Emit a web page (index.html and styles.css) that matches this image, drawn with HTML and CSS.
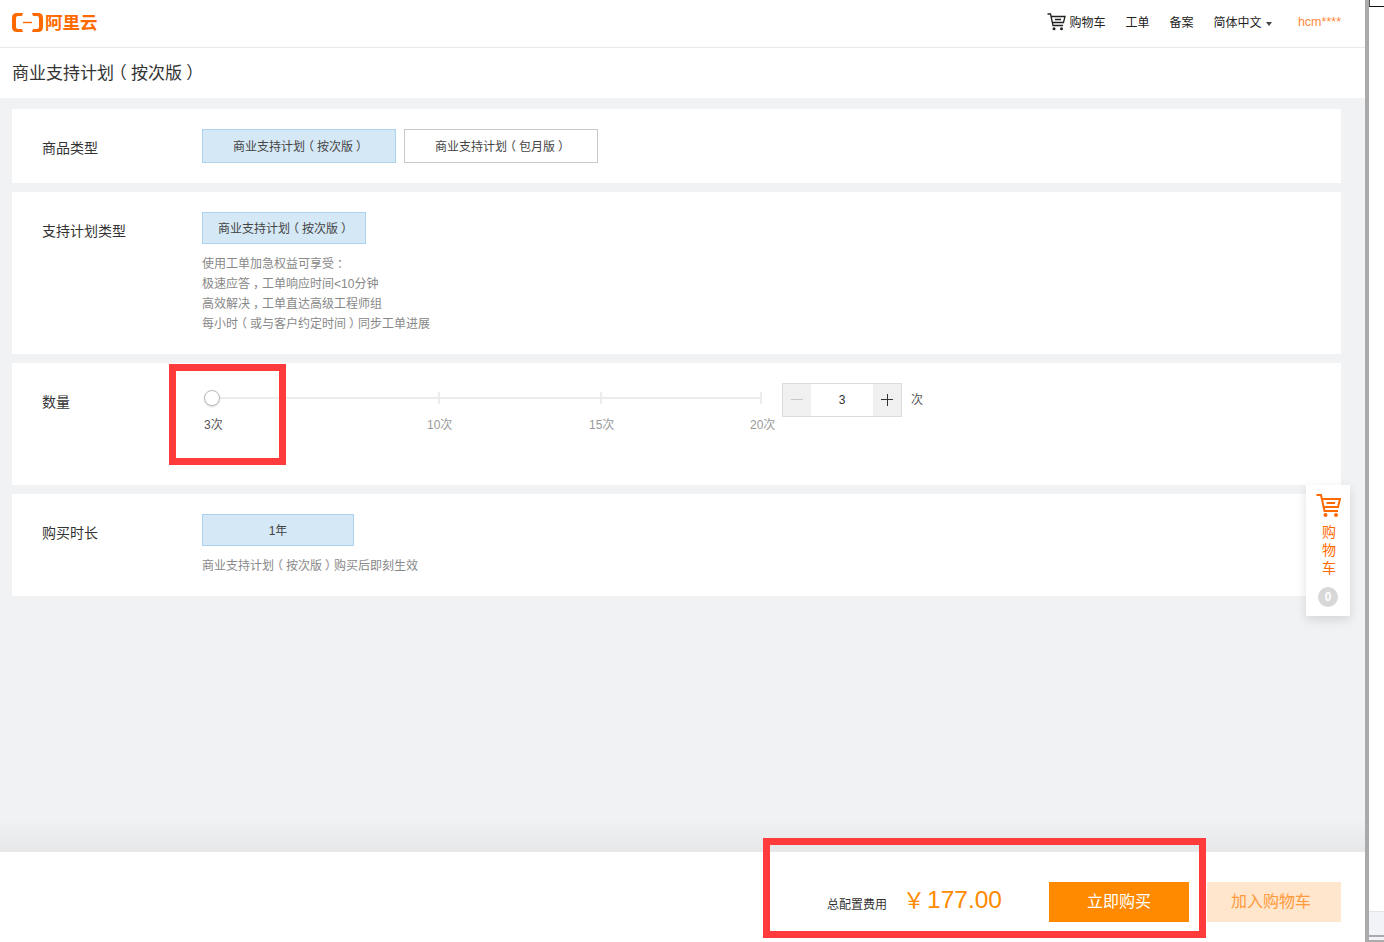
FILE: index.html
```html
<!DOCTYPE html>
<html lang="zh-CN">
	<head>
		<meta charset="utf-8">
		<title>商业支持计划</title>
		<link rel="stylesheet" href="styles.css">
	</head>
	<body>
		<div class="page">
			<div class="topBar">
				<div class="logo">
					<svg width="31" height="19" viewBox="0 0 31 19">
						<path d="M11 0H5Q0 0 0 5V14Q0 19 5 19H11L10 16H6Q4 16 4 14V5Q4 3 6 3H10Z" fill="#ff6a00"/>
						<path d="M20 0H26Q31 0 31 5V14Q31 19 26 19H20L21 16H25Q27 16 27 14V5Q27 3 25 3H21Z" fill="#ff6a00"/>
						<path d="M11 9.5H20" stroke="#ff6a00" stroke-width="1.4"/>
					</svg>
					<span class="logoText">阿里云</span>
				</div>
				<div class="topNav">
					<a class="navCart">
						<svg width="19" height="18" viewBox="0 0 19 18">
							<path d="M0.5 1H3.5L6 12.5H16M4.2 3.5H18L16.5 9.5H5.5M8 6.5H14" fill="none" stroke="#222" stroke-width="1.3"/>
							<circle cx="7" cy="15.8" r="1.5" fill="#222"/>
							<circle cx="14.5" cy="15.8" r="1.5" fill="#222"/>
						</svg>
						购物车
					</a>
					<a class="navItem">工单</a>
					<a class="navItem">备案</a>
					<a class="navItem">简体中文 <span class="caret"></span></a>
					<a class="navUser">hcm****</a>
				</div>
			</div>

			<div class="titleBar">商业支持计划<span class="pn">（</span>按次版<span class="pn">）</span></div>

			<div class="content">
				<div class="card cardType">
					<div class="label">商品类型</div>
					<div class="options">
						<div class="option active wide">商业支持计划<span class="pn">（</span>按次版<span class="pn">）</span></div>
						<div class="option wide">商业支持计划<span class="pn">（</span>包月版<span class="pn">）</span></div>
					</div>
				</div>

				<div class="card cardPlan">
					<div class="label">支持计划类型</div>
					<div class="field">
						<div class="option active plan">商业支持计划<span class="pn">（</span>按次版<span class="pn">）</span></div>
						<div class="desc">
							使用工单加急权益可享受<span class="pn">：</span><br>
							极速应答<span class="pn">，</span>工单响应时间&lt;10分钟<br>
							高效解决<span class="pn">，</span>工单直达高级工程师组<br>
							每小时<span class="pn">（</span>或与客户约定时间<span class="pn">）</span>同步工单进展
						</div>
					</div>
				</div>

				<div class="card cardCount">
					<div class="label">数量</div>
					<div class="sliderRow">
						<div class="slider">
							<div class="rail">
								<span class="tick" style="left: 234px"></span>
								<span class="tick" style="left: 396px"></span>
								<span class="tick" style="left: 556px"></span>
								<span class="handle"></span>
							</div>
							<div class="marks">
								<span class="mark first" style="left: 2px">3次</span>
								<span class="mark" style="left: 225px">10次</span>
								<span class="mark" style="left: 387px">15次</span>
								<span class="mark" style="left: 548px">20次</span>
							</div>
						</div>
						<div class="stepper">
							<span class="stepBtn minus"><i></i></span>
							<span class="stepVal">3</span>
							<span class="stepBtn plus"><i></i><b></b></span>
						</div>
						<span class="unit">次</span>
					</div>
				</div>

				<div class="card cardTime">
					<div class="label">购买时长</div>
					<div class="field">
						<div class="option active year">1年</div>
						<div class="desc">商业支持计划<span class="pn">（</span>按次版<span class="pn">）</span>购买后即刻生效</div>
					</div>
				</div>
			</div>

			<div class="bottomBar">
				<span class="totalLabel">总配置费用</span>
				<span class="price"><span class="yen">￥</span>177.00</span>
				<a class="buyBtn">立即购买</a>
				<a class="addBtn">加入购物车</a>
			</div>

			<div class="sideCart">
				<svg width="25" height="24" viewBox="0 0 25 24">
					<path d="M0.5 1H5L8.5 17H22M6 5H24L22 13H7.5M10.5 9H19" fill="none" stroke="#ff6a00" stroke-width="2"/>
					<circle cx="9.5" cy="21" r="2" fill="#ff6a00"/>
					<circle cx="20" cy="21" r="2" fill="#ff6a00"/>
				</svg>
				<div class="sideText">购<br>物<br>车</div>
				<span class="sideCount">0</span>
			</div>

			<div class="mark1"></div>
			<div class="mark2"></div>
		</div>

		<div class="scrollEdge">
			<div class="edgeTop"></div>
			<div class="edgeBottom"></div>
		</div>
	</body>
</html>
```

FILE: styles.css
```css
html, body { margin: 0; height: 100%; overflow: hidden; }

body
{
	display: flex;
	background-color: white;
	font-family: "Liberation Sans", "Noto Sans CJK SC", sans-serif;
	font-size: 12px;
	color: #333;
	text-spacing-trim: space-all;
}

a { color: inherit; text-decoration: none; }

/* full width punctuation sits centred in its cell */
.pn
{
	margin: 0 0.25em;
	font-feature-settings: "halt";
}

.page
{
	position: relative;
	display: flex;
	flex: none;
	flex-direction: column;
	width: 1365px;
	height: 942px;
	background-color: #f1f2f4;
}

.topBar
{
	display: flex;
	flex: none;
	justify-content: space-between;
	align-items: center;
	box-sizing: border-box;
	height: 48px;
	padding: 0 24px 4px 12px;
	border-bottom: 1px solid #e8e8e8;
	background-color: white;
}

.logo
{
	display: flex;
	align-items: center;
	color: #ff6a00;
}

.logo svg { margin-top: 2px; }

.logoText
{
	margin-left: 2px;
	font-size: 17.5px;
	font-weight: bold;
}

.topNav
{
	display: flex;
	align-items: center;
	color: #222;
}

.navCart
{
	display: flex;
	align-items: center;
	gap: 4px;
	margin-right: 20px;
}

.navItem { margin-right: 20px; }

.caret
{
	display: inline-block;
	margin-left: 1px;
	vertical-align: middle;
	border-top: 4px solid #444;
	border-left: 3.5px solid transparent;
	border-right: 3.5px solid transparent;
}

.navUser
{
	margin-left: 6px;
	color: #ff8a3c;
	font-size: 12.5px;
}

.titleBar
{
	flex: none;
	box-sizing: border-box;
	height: 50px;
	padding: 0 12px;
	background-color: white;
	color: #333;
	font-size: 17px;
	line-height: 52px;
}

.content
{
	flex: 1;
	display: flex;
	flex-direction: column;
	gap: 9px;
	padding: 11px 24px 0 12px;
	background: linear-gradient(to bottom, #f1f2f4 720px, #e6e7e9 100%);
}

.card
{
	display: flex;
	flex: none;
	box-sizing: border-box;
	padding: 20px 0 0 30px;
	background-color: white;
}

.cardType { height: 74px; }
.cardPlan { height: 162px; }
.cardCount { height: 122px; }
.cardTime { height: 102px; }

.label
{
	flex: none;
	width: 160px;
	padding-top: 11px;
	color: #333;
	font-size: 14px;
	line-height: 16px;
}

.options
{
	display: flex;
	gap: 8px;
}

.option
{
	box-sizing: border-box;
	height: 34px;
	border: 1px solid #c7c9cc;
	color: #444;
	line-height: 35px;
	text-align: center;
}

.option.active
{
	border-color: #acd2ee;
	background-color: #d5e8f6;
}

.wide { width: 194px; }
.plan { width: 164px; height: 32px; line-height: 33px; }
.year { width: 152px; height: 32px; line-height: 33px; }

.desc
{
	margin-top: 10px;
	color: #888;
	line-height: 20px;
}

.sliderRow
{
	display: flex;
	align-items: flex-start;
}

.slider
{
	position: relative;
	width: 580px;
	height: 60px;
}

.rail
{
	position: absolute;
	left: 2px;
	top: 14px;
	width: 558px;
	height: 2px;
	background-color: #ececec;
}

.tick
{
	position: absolute;
	top: -5px;
	width: 2px;
	height: 12px;
	background-color: #ececec;
}

.handle
{
	position: absolute;
	left: 0;
	top: -7px;
	box-sizing: border-box;
	width: 16px;
	height: 16px;
	border: 1px solid #bbb;
	border-radius: 100%;
	background-color: white;
	box-shadow: 0 1px 2px rgba(0, 0, 0, 0.15);
}

.marks span
{
	position: absolute;
	top: 32px;
	color: #999;
}

.marks .first { color: #555; }

.stepper
{
	display: flex;
	box-sizing: border-box;
	width: 120px;
	height: 34px;
	border: 1px solid #dcdcdc;
	background-color: white;
}

.stepBtn
{
	position: relative;
	flex: none;
	width: 28px;
	background-color: #f0f0f0;
}

.stepBtn i
{
	position: absolute;
	left: 8px;
	top: 15px;
	width: 12px;
	height: 1px;
	background-color: #c8c8c8;
}

.plus i, .plus b
{
	background-color: #333;
}

.plus b
{
	position: absolute;
	left: 13.5px;
	top: 9.5px;
	width: 1px;
	height: 12px;
}

.stepVal
{
	flex: 1;
	line-height: 32px;
	text-align: center;
}

.unit
{
	margin: 7px 0 0 9px;
	color: #555;
}

.bottomBar
{
	display: flex;
	flex: none;
	align-items: center;
	box-sizing: border-box;
	height: 90px;
	padding: 10px 24px 0 827px;
	background-color: white;
}

.totalLabel
{
	flex: none;
	width: 60px;
	margin-top: 2px;
	color: #333;
	white-space: nowrap;
}

.price
{
	flex: none;
	width: 144px;
	margin: -8px 0 0 18px;
	color: #ff8a00;
	font-size: 24.5px;
	white-space: nowrap;
}

.yen
{
	margin: 0 2px 0 -2px;
	font-size: 22px;
}

.buyBtn, .addBtn
{
	flex: none;
	box-sizing: border-box;
	height: 40px;
	font-size: 16px;
	line-height: 40px;
	text-align: center;
}

.buyBtn
{
	width: 140px;
	background-color: #ff8a00;
	color: white;
}

.addBtn
{
	width: 134px;
	margin-left: 18px;
	padding-right: 6px;
	background-color: #ffe6cc;
	color: #ff9a3c;
}

.sideCart
{
	position: absolute;
	left: 1306px;
	top: 485px;
	display: flex;
	flex-direction: column;
	align-items: center;
	box-sizing: border-box;
	width: 44px;
	height: 131px;
	padding-top: 9px;
	background-color: white;
	box-shadow: 0 4px 10px rgba(0, 0, 0, 0.12);
}

.sideText
{
	margin: 5px 0 0 2px;
	color: #ff6a00;
	font-size: 14px;
	line-height: 18px;
}

.sideCount
{
	width: 20px;
	height: 20px;
	margin-top: 10px;
	border-radius: 100%;
	background-color: #d8d8d8;
	color: white;
	font-weight: bold;
	line-height: 20px;
	text-align: center;
}

.mark1, .mark2
{
	position: absolute;
	box-sizing: border-box;
	border: 7px solid #ff3b3b;
	pointer-events: none;
}

.mark1
{
	left: 169px;
	top: 364px;
	width: 117px;
	height: 101px;
}

.mark2
{
	left: 763px;
	top: 838px;
	width: 443px;
	height: 100px;
}

.scrollEdge
{
	display: flex;
	flex: 1;
	flex-direction: column;
	justify-content: space-between;
	box-sizing: border-box;
	border-left: 4px solid #aaa;
	box-shadow: -3px 0 4px rgba(0, 0, 0, 0.08);
	background-color: white;
}

.edgeTop
{
	height: 6px;
	border-bottom: 1px solid #111;
	border-left: 1px solid #555;
}

.edgeBottom
{
	box-sizing: border-box;
	height: 31px;
	border-top: 1px solid #e4e4e4;
	border-bottom: 7px double #aaa;
	background-color: #f1f3f8;
}
```
